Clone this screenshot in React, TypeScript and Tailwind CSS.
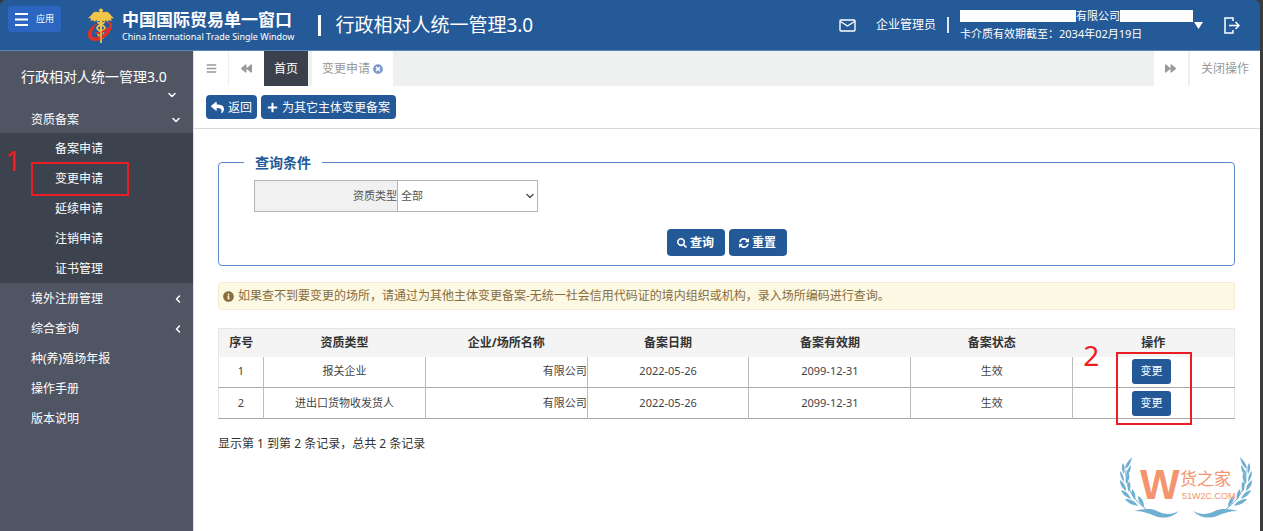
import { useState } from 'react';
import type { ReactNode } from 'react';
import {
  FaBackward,
  FaBars,
  FaForward,
  FaInfoCircle,
  FaPlus,
  FaReply,
  FaSearch,
  FaTimesCircle,
} from 'react-icons/fa';
import { ChevronDown, ChevronLeft } from 'lucide-react';

interface RecordRow {
  id: number;
  type: string;
  company: string;
  filedAt: string;
  validUntil: string;
  status: string;
}

const SUB_MENU = ['备案申请', '变更申请', '延续申请', '注销申请', '证书管理'];

const MENU = [
  { label: '境外注册管理', expandable: true },
  { label: '综合查询', expandable: true },
  { label: '种(养)殖场年报', expandable: false },
  { label: '操作手册', expandable: false },
  { label: '版本说明', expandable: false },
];

const COLUMNS = ['资质类型', '企业/场所名称', '备案日期', '备案有效期', '备案状态', '操作'];

const ROWS: RecordRow[] = [
  { id: 1, type: '报关企业', company: '有限公司', filedAt: '2022-05-26', validUntil: '2099-12-31', status: '生效' },
  { id: 2, type: '进出口货物收发货人', company: '有限公司', filedAt: '2022-05-26', validUntil: '2099-12-31', status: '生效' },
];

export default function App() {
  return (
    <div className="min-h-screen bg-[#3b3b3b] pr-[3px] font-['Noto_Sans','Noto_Sans_CJK_SC',sans-serif] text-xs text-[#333]">
      <div className="relative flex min-h-screen flex-col">
        <Header />
        <div className="flex flex-1">
          <Sidebar />
          <main className="min-w-0 flex-1 border-l border-[#dde0e6] bg-white">
            <TabBar />
            <div className="flex gap-1 border-b border-[#d9d9d9] px-3 py-[9px]">
              <button className="flex h-6 items-center gap-1 rounded bg-[#245998] px-[5px] pt-px text-white">
                <FaReply size={13} />
                返回
              </button>
              <button className="flex h-6 items-center gap-1 rounded bg-[#245998] px-[6px] pt-px text-white">
                <FaPlus size={11} />
                为其它主体变更备案
              </button>
            </div>
            <div className="pt-[23px] pr-[25px] pb-16 pl-6">
              <QueryForm />
              <p className="mt-4 flex h-7 items-center gap-1 rounded-[3px] border border-[#f7ecd0] bg-[#fbf8e3] px-1 text-[#8a6d3b]">
                <FaInfoCircle size={11} />
                如果查不到要变更的场所，请通过为其他主体变更备案-无统一社会信用代码证的境内组织或机构，录入场所编码进行查询。
              </p>
              <RecordTable />
              <p className="mt-[15px] leading-5">显示第 1 到第 2 条记录，总共 2 条记录</p>
            </div>
          </main>
        </div>
        <Watermark />
      </div>
    </div>
  );
}

function Header() {
  return (
    <header className="flex h-[51px] items-center rounded-t-md border-b border-[#5b86b9] bg-[#255a98] pr-5 pl-2 text-white">
      <button className="mb-3 flex h-[26px] w-[53px] items-center justify-center gap-2 rounded-[3px] bg-[#2c66c0] text-[9px]">
        <svg width="13" height="13" viewBox="0 0 13 13" stroke="currentColor" strokeWidth="2">
          <path d="M0 1h13M0 6.5h13M0 12h13" />
        </svg>
        应用
      </button>
      <Emblem />
      <div className="ml-[7px] pt-1">
        <p className="text-[17px] leading-5 font-bold">中国国际贸易单一窗口</p>
        <p className="text-[9px] leading-[14px]">China International Trade Single Window</p>
      </div>
      <span className="ml-6 h-[21px] w-[3px] bg-white" />
      <h1 className="ml-[14px] pt-px text-[19px]">行政相对人统一管理3.0</h1>

      <div className="ml-auto flex items-center">
        <svg width="17" height="13" viewBox="0 0 17 13" fill="none" stroke="currentColor" strokeWidth="1.4">
          <rect x="1" y="1" width="15" height="11" rx="1" />
          <path d="M1.5 2.5 8.5 7l7-4.5" />
        </svg>
        <span className="ml-5">企业管理员</span>
        <span className="mx-[11px] h-4 w-[2px] bg-[#dfe8f3]" />
        <div className="text-[11px] leading-[18px]">
          <p className="flex items-center">
            <span className="h-3 w-[116px] bg-white" />
            有限公司
            <span className="mb-px h-3 w-[73px] bg-white" />
          </p>
          <p>卡介质有效期截至：2034年02月19日</p>
        </div>
        <svg className="ml-px" width="9" height="7" viewBox="0 0 9 7" fill="currentColor">
          <path d="M0 0h9L4.500 7z" />
        </svg>
        <svg className="ml-[21px]" width="16" height="17" viewBox="0 0 16 17" fill="none" stroke="currentColor" strokeWidth="1.500">
          <path d="M9 4V1H1v15h8v-3M5 8.500h10M11.500 5 15 8.500 11.500 12" />
        </svg>
      </div>
    </header>
  );
}

function Emblem() {
  return (
    <svg className="ml-[26px]" width="28" height="35" viewBox="0 0 28 35" fill="none">
      <path
        d="M14 4C11 5 9 2 6 5 4 7 3 9 1 10l3 .5L3.500 13l3-1L7 14l2.500-2 .5 2 2.500-1.500V15h3v-2.500L18 14l.5-2 2.500 2 .5-2 3 1-.5-2.500 3-.5c-2-1-3-3-5-5-3-3-5 0-8-1z"
        fill="#f3c64a"
      />
      <circle cx="14" cy="2.500" r="2" fill="#f3c64a" />
      <path d="M13 4h2l-.3 31h-1.400z" fill="#f3c64a" />
      <path
        d="M11 14c0 3 7 3 7 6s-7 3-7 6 5 3 5 5M17 14c0 3-7 3-7 6s7 3 7 6-4 3-5 5"
        stroke="#f3c64a"
        strokeWidth="1.600"
      />
      <path
        d="M10 15.500C4 18 0 23 1 28c1 5 7 6 12 4 6-2 11-8 12-13 1-4-2-6-7-4.500 3 0 5 1 4 4-1 4-5 8-10 10-4 1.500-7 1-7-2 0-4 2-8 5-10.500z"
        fill="#dc3328"
      />
      <path d="M8 25c5 .5 9-1 13-5" stroke="#dc3328" strokeWidth="1.800" />
      <path d="M13.200 13h1.600l-.2 22h-1.200z" fill="#f3c64a" />
    </svg>
  );
}

function Sidebar() {
  return (
    <nav className="w-[193px] shrink-0 bg-[#505564] text-white">
      <a href="#system" className="block h-[53px] px-[21px] pt-[15px] text-sm leading-[22px]">
        行政相对人统一管理3.0
        <ChevronDown className="mt-px -mr-[6px] ml-auto" size={12} strokeWidth={3} />
      </a>
      <a href="#filing" className="flex h-[29px] items-center justify-between pt-[2px] pr-[11px] pl-[31px]">
        资质备案
        <ChevronDown size={12} strokeWidth={3} />
      </a>
      <ul className="bg-[#3d434e]">
        {SUB_MENU.map((label) => (
          <li key={label} className="relative">
            <a href="#sub" className="flex h-[30px] items-center pt-[2px] pl-[55px]">
              {label}
            </a>
            {label === '变更申请' && (
              <Marker number="1" numberClass="-top-5 -left-7" boxClass="-top-px left-[31px] h-[34px] w-[98px]" />
            )}
          </li>
        ))}
      </ul>
      <ul>
        {MENU.map((item) => (
          <li key={item.label}>
            <a href="#menu" className="flex h-[30px] items-center justify-between pt-[2px] pr-[9px] pl-[31px]">
              {item.label}
              {item.expandable && <ChevronLeft size={12} strokeWidth={3} />}
            </a>
          </li>
        ))}
      </ul>
    </nav>
  );
}

// Red step outline with its number beside it
function Marker({ number, numberClass, boxClass }: { number: string; numberClass: string; boxClass: string }) {
  return (
    <div className={`pointer-events-none absolute z-10 border-2 border-[#ec1c24] ${boxClass}`}>
      <span className={`absolute text-[28px] leading-8 text-[#ec1c24] ${numberClass}`}>{number}</span>
    </div>
  );
}

function TabBar() {
  return (
    <div className="flex h-[35px] bg-[#eff1f1] text-[11px] text-[#999]">
      <button aria-label="菜单" className="flex w-[35px] items-center justify-center border-r border-[#eee] bg-white">
        <FaBars size={11} />
      </button>
      <button aria-label="向左" className="flex w-[35px] items-center justify-center bg-white">
        <FaBackward size={11} />
      </button>
      <button className="bg-[#3b414c] px-[10px] text-xs text-white">首页</button>
      <button className="ml-1 flex items-center gap-[3px] bg-white px-[10px] text-xs">
        变更申请
        <FaTimesCircle size={10} className="text-[#7797cd]" />
      </button>
      <button aria-label="向右" className="ml-auto flex w-[34px] items-center justify-center bg-white">
        <FaForward size={11} />
      </button>
      <button className="ml-[2px] bg-white px-[11px] text-xs">关闭操作</button>
    </div>
  );
}

function QueryForm() {
  const [type, setType] = useState('全部');

  return (
    <fieldset className="rounded border border-[#5b8acb] px-[35px] pb-[9px]">
      <legend className="-ml-[10px] px-[11px] text-sm leading-[21px] font-bold text-[#245998]">查询条件</legend>
      <div className="mt-[7px] flex h-8 w-[284px] border border-[#b5b5b5] text-[11px] text-[#555]">
        <label htmlFor="type" className="flex w-[143px] items-center justify-end border-r border-[#b5b5b5] bg-[#f1f1f1]">
          资质类型
        </label>
        <div className="relative flex-1">
          <select
            id="type"
            value={type}
            onChange={(e) => setType(e.target.value)}
            className="h-full w-full appearance-none bg-white pl-[3px]"
          >
            <option>全部</option>
            <option>报关企业</option>
            <option>进出口货物收发货人</option>
          </select>
          <ChevronDown size={12} strokeWidth={3} className="pointer-events-none absolute top-[9px] right-px" />
        </div>
      </div>
      <div className="mt-[17px] flex justify-center gap-1">
        <PrimaryButton>
          <FaSearch size={10} />
          查询
        </PrimaryButton>
        <PrimaryButton>
          <svg width="10" height="12" viewBox="0 0 1536 1792" fill="currentColor">
            <path d="M1511 1056q0 5-1 7-64 268-268 434.500t-478 166.500q-146 0-282.500-55t-243.500-157l-129 129q-19 19-45 19t-45-19-19-45v-448q0-26 19-45t45-19h448q26 0 45 19t19 45-19 45l-137 137q71 66 161 102t187 36q134 0 250-65t186-179q11-17 53-117 8-23 30-23h192q13 0 22.500 9.500t9.500 22.500zm25-800v448q0 26-19 45t-45 19h-448q-26 0-45-19t-19-45 19-45l138-138q-148-137-349-137-134 0-250 65t-186 179q-11 17-53 117-8 23-30 23h-199q-13 0-22.500-9.500t-9.500-22.500v-7q65-268 270-434.500t480-166.500q146 0 284 55.500t245 156.500l130-129q19-19 45-19t45 19 19 45z" />
          </svg>
          重置
        </PrimaryButton>
      </div>
    </fieldset>
  );
}

function PrimaryButton({ children }: { children: ReactNode }) {
  return (
    <button type="button" className="flex h-[27px] w-[58px] items-center justify-center gap-[3px] rounded bg-[#245998] pt-px font-bold text-white">
      {children}
    </button>
  );
}

function RecordTable() {
  return (
    <table className="mt-[18px] w-full table-fixed border-collapse border border-[#e3e7e8] text-center text-[11px] text-[#444]">
      <thead>
        <tr className="h-7 bg-[#f4f4f4] text-xs text-[#333]">
          <th className="w-[45px]">序号</th>
          {COLUMNS.map((name) => (
            <th key={name}>{name}</th>
          ))}
        </tr>
      </thead>
      <tbody>
        {ROWS.map((row) => (
          <tr key={row.id} className="h-[31px] border-b border-[#aaa]">
            <td>{row.id}</td>
            <td className="border-l border-[#bbb]">{row.type}</td>
            <td className="border-l border-[#bbb] text-right">{row.company}</td>
            <td className="border-l border-[#bbb]">{row.filedAt}</td>
            <td className="border-l border-[#bbb]">{row.validUntil}</td>
            <td className="border-l border-[#bbb]">{row.status}</td>
            <td className="relative border-l border-[#bbb] pr-1">
              <button className="h-[25px] w-[39px] rounded-[3px] bg-[#245998] align-middle text-white">变更</button>
              {row.id === 1 && (
                <Marker number="2" numberClass="-top-[15px] -left-[35px]" boxClass="-top-[5px] left-[43px] h-[73px] w-[76px]" />
              )}
            </td>
          </tr>
        ))}
      </tbody>
    </table>
  );
}

function Watermark() {
  return (
    <svg className="pointer-events-none absolute right-2 bottom-3" width="132" height="62" viewBox="0 0 132 62">
      <Laurel />
      <g transform="translate(132 0) scale(-1 1)">
        <Laurel />
      </g>
      <g fill="#f3946e" className="font-['Liberation_Sans','Noto_Sans_CJK_SC',sans-serif]">
        <text x="20" y="42" fontSize="42" fontWeight="700">W</text>
        <text x="60" y="28" fontSize="17">货之家</text>
        <text x="62" y="42" fontSize="9">51W2C.COM</text>
      </g>
    </svg>
  );
}

// Half of the wreath: leaves in pairs along a curved stem, tail swept to the middle
function Laurel() {
  return (
    <g fill="#6fb0d0">
      <path d="M12 0c-4 4-7 8-7 12 4-2 6-7 7-12zM11 8c-3 3-5 7-5 11 3-2 5-6 5-11z" />
      <path d="M3 6c-2 4-1 8 1 11 1-4 1-8-1-11zM0 14c0 4 1 8 4 11 0-5-1-8-4-11z" />
      <path d="M9 16c-3 3-4 6-3 11 3-3 4-6 3-11zM0 23c0 5 2 8 6 11 0-5-2-8-6-11z" />
      <path d="M9 24c-2 4-2 7 0 11 2-4 2-8 0-11zM1 33c2 5 5 7 10 9-2-5-5-8-10-9z" />
      <path d="M12 32c-1 4 0 7 3 11 1-5 0-8-3-11zM5 42c3 4 7 6 13 7-3-5-7-7-13-7z" />
      <path d="M18 39c0 5 2 8 6 11 0-5-2-9-6-11z" />
      <path d="M14 54c8-2 17-3 23 0 8 4 14 4 22 0-7 7-16 8-24 5-6-3-13-5-21-5z" />
      <path d="M6 13c-1 12 4 28 20 39" fill="none" stroke="#6fb0d0" />
    </g>
  );
}
